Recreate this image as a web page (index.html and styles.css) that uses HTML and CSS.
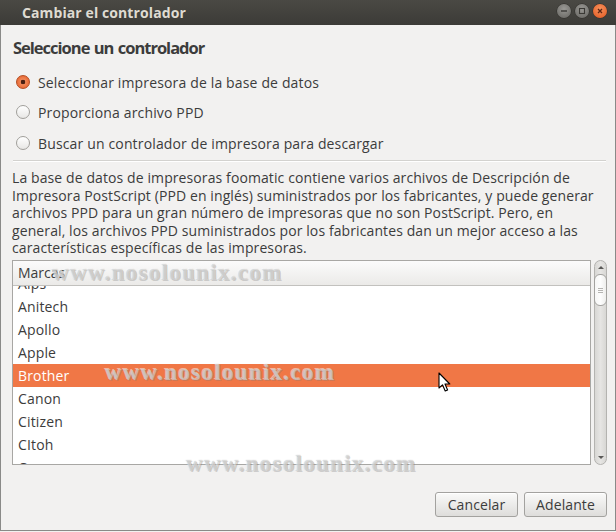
FILE: index.html
```html
<!DOCTYPE html>
<html lang="es">
<head>
<meta charset="utf-8">
<title>Cambiar el controlador</title>
<link rel="stylesheet" href="styles.css">
</head>
<body>
<div class="window">
  <div class="titlebar">
    <span class="title">Cambiar el controlador</span>
    <div class="wm-buttons">
      <span class="wm-btn wm-min"><svg width="14" height="14" viewBox="0 0 14 14"><path d="M4 7h6" stroke="#3a3935" stroke-width="1.4"/></svg></span>
      <span class="wm-btn wm-max"><svg width="14" height="14" viewBox="0 0 14 14"><rect x="4.5" y="4.5" width="5" height="5" fill="none" stroke="#3a3935" stroke-width="1.1"/></svg></span>
      <span class="wm-btn wm-close"><svg width="14" height="14" viewBox="0 0 14 14"><path d="M5 5l4 4M9 5l-4 4" stroke="#5a2514" stroke-width="1.3"/></svg></span>
    </div>
  </div>
  <div class="content">
    <h1 class="heading">Seleccione un controlador</h1>
    <div class="radios">
      <div class="radio-row"><span class="radio checked"></span><span>Seleccionar impresora de la base de datos</span></div>
      <div class="radio-row"><span class="radio"></span><span>Proporciona archivo PPD</span></div>
      <div class="radio-row"><span class="radio"></span><span>Buscar un controlador de impresora para descargar</span></div>
    </div>
    <div class="sep"></div>
    <p class="desc">La base de datos de impresoras foomatic contiene varios archivos de Descripción de Impresora PostScript (PPD en inglés) suministrados por los fabricantes, y puede generar archivos PPD para un gran número de impresoras que no son PostScript. Pero, en general, los archivos PPD suministrados por los fabricantes dan un mejor acceso a las características específicas de las impresoras.</p>
    <div class="list-area">
      <div class="list">
        <div class="list-header">Marcas</div>
        <div class="list-body">
          <ul class="rows">
            <li>Alps</li>
            <li>Anitech</li>
            <li>Apollo</li>
            <li>Apple</li>
            <li class="selected">Brother</li>
            <li>Canon</li>
            <li>Citizen</li>
            <li>CItoh</li>
            <li>Compaq</li>
          </ul>
        </div>
      </div>
      <div class="scrollbar">
        <span class="arrow up"></span>
        <span class="thumb"><span class="grip"></span></span>
        <span class="arrow down"></span>
      </div>
    </div>
    <div class="buttons">
      <button class="btn">Cancelar</button>
      <button class="btn">Adelante</button>
    </div>
  </div>
  <span class="watermark wm1">www.nosolounix.com</span>
  <span class="watermark wm2">www.nosolounix.com</span>
  <span class="watermark wm3">www.nosolounix.com</span>
  <svg class="cursor" width="14" height="21" viewBox="0 0 14 21"><path d="M1 1 L1 16 L4.5 12.8 L7.2 19 L9.6 18 L7 12 L11.8 12 Z" fill="#fff" stroke="#000" stroke-width="1.1" stroke-linejoin="round"/></svg>
</div>
</body>
</html>
```

FILE: styles.css
```css
* { box-sizing: border-box; }
html, body { margin: 0; padding: 0; }
body {
  width: 616px;
  height: 532px;
  background: #f2f1f0;
  font-family: "Open Sans", "DejaVu Sans", sans-serif;
  color: #3c3c3c;
  overflow: hidden;
}
.window {
  position: relative;
  width: 616px;
  height: 531px;
  background: #f2f1f0;
  border: 1px solid #8a8a88;
  border-top: none;
  display: flex;
  flex-direction: column;
}
.titlebar {
  height: 25px;
  margin: 0 -1px;
  background: linear-gradient(#4a4944, #3c3b37);
  display: flex;
  align-items: center;
  padding-left: 22px;
  padding-right: 9px;
}
.title {
  flex: 1;
  color: #dfdbd2;
  font-weight: 700;
  font-size: 14px;
  line-height: 25px;
  letter-spacing: 0.1px;
}
.wm-buttons { display: flex; gap: 4px; align-items: center; margin-top: -3px; }
.wm-btn {
  width: 14px; height: 14px; border-radius: 50%;
  display: block;
  background: radial-gradient(circle at 50% 35%, #9a9995, #64635f);
  box-shadow: 0 0 0 0.5px #2e2d2a;
}
.wm-btn svg { display: block; }
.wm-close { background: radial-gradient(circle at 50% 35%, #f8925c, #e0561f); }

.content {
  flex: 1;
  padding: 13px 8px 0 11px;
  display: flex;
  flex-direction: column;
}
.heading {
  margin: 0;
  font-size: 16.5px;
  line-height: 20px;
  font-weight: 700;
  letter-spacing: -1px;
  word-spacing: 1px;
  padding-left: 1px;
}
.radios { margin-top: 9px; display: flex; flex-direction: column; }
.radio-row {
  height: 30px;
  display: flex;
  align-items: center;
  gap: 8px;
  padding-left: 4px;
  font-size: 14px;
  letter-spacing: 0.15px;
}
.radio-row:nth-child(3) { margin-top: 1px; }
.radio {
  width: 14px; height: 14px; border-radius: 50%;
  border: 1px solid #a19f9b;
  background: linear-gradient(#ffffff, #e8e7e5);
  flex: none;
  position: relative;
}
.radio.checked {
  border-color: #b34d23;
  background: radial-gradient(circle, #4a2012 0 2px, #f08858 2.6px, #e8642e 7px);
}
.sep {
  margin-top: 2px;
  height: 2px;
  border-top: 1px solid #d3d2cf;
  border-bottom: 1px solid #ffffff;
  margin-right: 1px;
  margin-left: 1px;
}
.desc {
  margin: 7px 0 0 0;
  font-size: 14px;
  line-height: 17.5px;
  letter-spacing: 0.1px;
  height: 91px;
}
.list-area {
  display: flex;
  gap: 3px;
  height: 205px;
}
.list {
  flex: 1;
  border: 1px solid #a8a7a4;
  background: #fff;
  display: flex;
  flex-direction: column;
  overflow: hidden;
}
.list-header {
  height: 25px;
  flex: none;
  padding-left: 5px;
  font-size: 14px;
  line-height: 24px;
  background: linear-gradient(#fbfbfb, #ebeae8);
  border-bottom: 1px solid #c2c1be;
}
.list-body { flex: 1; overflow: hidden; }
.rows {
  list-style: none;
  margin: -14px 0 0 0;
  padding: 0;
}
.rows li {
  height: 23px;
  line-height: 23px;
  padding-left: 5px;
  font-size: 14px;
  letter-spacing: 0.15px;
}
.rows li.selected { background: #f07746; color: #ffffff; }
.scrollbar {
  width: 13px;
  flex: none;
  border: 1px solid #b4b3b0;
  border-radius: 7px;
  background: linear-gradient(90deg, #d8d7d4, #e6e5e3 50%, #d8d7d4);
  display: flex;
  flex-direction: column;
  align-items: center;
  position: relative;
}
.arrow {
  width: 0; height: 0;
  border-left: 3px solid transparent;
  border-right: 3px solid transparent;
}
.arrow.up { border-bottom: 3px solid #5a5957; margin-top: 5px; }
.arrow.down { border-top: 3px solid #5a5957; margin-top: auto; margin-bottom: 5px; }
.thumb {
  margin-top: 5px;
  width: 13px;
  height: 32px;
  border: 1px solid #a3a29f;
  border-radius: 6px;
  background: linear-gradient(90deg, #f6f6f5, #fdfdfd 50%, #eeeeec);
  display: flex;
  align-items: center;
  justify-content: center;
}
.grip {
  width: 5px; height: 5px;
  border-top: 1px solid #b5b4b1;
  border-bottom: 1px solid #b5b4b1;
  position: relative;
}
.grip::after {
  content: "";
  position: absolute;
  left: 0; right: 0; top: 1px;
  border-top: 1px solid #b5b4b1;
}
.buttons {
  margin-top: 27px;
  display: flex;
  justify-content: flex-end;
  gap: 6px;
}
.btn {
  height: 25px;
  font-family: inherit;
  font-size: 14px;
  color: #3c3c3c;
  border: 1px solid #a3a29f;
  border-radius: 3px;
  background: linear-gradient(#fafaf9, #dedddb);
  box-shadow: inset 0 1px 0 #ffffff;
  padding: 0 9px;
  letter-spacing: 0.1px;
}
.btn:first-child { width: 83px; }
.btn:last-child { width: 83px; }
.watermark {
  position: absolute;
  font-family: "Liberation Serif", serif;
  font-weight: 700;
  font-size: 23px;
  letter-spacing: 1.3px;
  line-height: 22px;
  color: rgba(245, 245, 245, 0.5);
  text-shadow: 0 0 1px rgba(100, 100, 100, 0.45), 1px 1px 0 rgba(130, 130, 130, 0.3), -1px -1px 0 rgba(255, 255, 255, 0.5);
  pointer-events: none;
  white-space: nowrap;
}
.wm1 { left: 51px; top: 262px; }
.wm2 { left: 104px; top: 362px; }
.wm3 { left: 185px; top: 453px; }
.cursor { position: absolute; left: 437px; top: 372px; }
```
